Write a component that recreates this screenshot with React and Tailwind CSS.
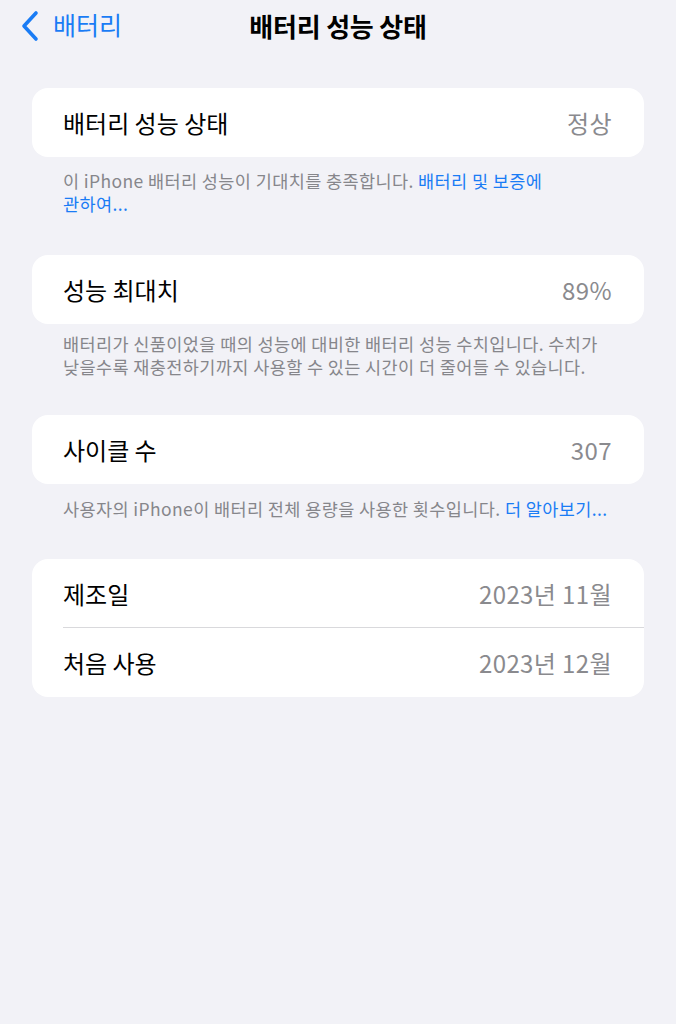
const font = { fontFamily: '"Noto Sans CJK KR", "Noto Sans", sans-serif' };

function Row({ label, value, divider }) {
  return (
    <div className="relative flex h-[69px] items-center justify-between pl-[31px] pr-[32px]">
      <span className="text-[24px] tracking-[0px] text-black">{label}</span>
      <span className="text-[24px] tracking-[0.4px] text-[#8a8a8e]">{value}</span>
      {divider && <div className="absolute bottom-0 left-[31px] right-0 h-px bg-[#d9d9dc]" />}
    </div>
  );
}

function Card({ children }) {
  return <div className="mx-[32px] overflow-hidden rounded-[16px] bg-white">{children}</div>;
}

function Note({ top, children }) {
  return (
    <div className={`px-[63px] ${top} text-[17.5px] leading-[23px] tracking-[0.4px] text-[#86868b]`}>
      {children}
    </div>
  );
}

export default function App() {
  return (
    <div className="min-h-[1024px] w-[676px] bg-[#f2f2f7]" style={font}>
      <div className="relative flex h-[50px] items-center">
        <div className="flex items-center pl-[20px]">
          <svg width="20" height="32" viewBox="0 0 20 32" className="mt-[1px]">
            <path d="M16 3 L4 16 L16 29" fill="none" stroke="#1a7cf5" strokeWidth="3.6" strokeLinecap="round" strokeLinejoin="round" />
          </svg>
          <span className="ml-[13px] text-[25px] text-[#1a7cf5]">배터리</span>
        </div>
        <div className="absolute inset-x-0 text-center text-[26px] font-bold tracking-[-0.2px] text-black">
          배터리 성능 상태
        </div>
      </div>

      <div className="pt-[38px]">
        <Card>
          <Row label="배터리 성능 상태" value="정상" />
        </Card>
        <Note top="pt-[12px]">
          <div className="whitespace-nowrap">
            이 iPhone 배터리 성능이 기대치를 충족합니다. <span className="text-[#1a7cf5]">배터리 및 보증에</span>
          </div>
          <div className="whitespace-nowrap text-[#1a7cf5]">관하여...</div>
        </Note>
      </div>

      <div className="pt-[40px]">
        <Card>
          <Row label="성능 최대치" value="89%" />
        </Card>
        <Note top="pt-[8px]">
          <div className="whitespace-nowrap">배터리가 신품이었을 때의 성능에 대비한 배터리 성능 수치입니다. 수치가</div>
          <div className="whitespace-nowrap">낮을수록 재충전하기까지 사용할 수 있는 시간이 더 줄어들 수 있습니다.</div>
        </Note>
      </div>

      <div className="pt-[37px]">
        <Card>
          <Row label="사이클 수" value="307" />
        </Card>
        <Note top="pt-[13px]">
          <div className="whitespace-nowrap">
            사용자의 iPhone이 배터리 전체 용량을 사용한 횟수입니다. <span className="text-[#1a7cf5]">더 알아보기...</span>
          </div>
        </Note>
      </div>

      <div className="pt-[39px]">
        <Card>
          <Row label="제조일" value="2023년 11월" divider />
          <Row label="처음 사용" value="2023년 12월" />
        </Card>
      </div>
    </div>
  );
}
